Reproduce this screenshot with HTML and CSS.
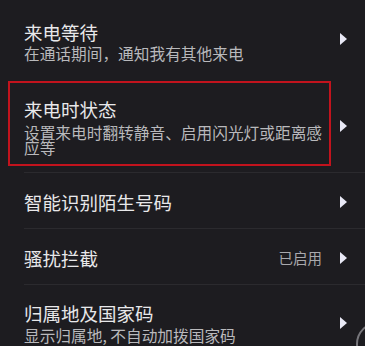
FILE: index.html
```html
<!DOCTYPE html>
<html lang="zh-CN">
<head>
<meta charset="utf-8">
<link rel="stylesheet" href="styles.css">
</head>
<body>
<div class="list">
  <div class="row row-first">
    <div class="text">
      <div class="title">来电等待</div>
      <div class="sub">在通话期间，通知我有其他来电</div>
    </div>
    <svg class="arrow arrow-up" viewBox="0 0 7 12" width="7" height="12"><polygon points="0,0 7,6 0,12"/></svg>
  </div>
  <div class="row row-box">
    <div class="highlight"></div>
    <div class="text">
      <div class="title">来电时状态</div>
      <div class="sub sub-wrap">设置来电时翻转静音、启用闪光灯或距离感应等</div>
    </div>
    <svg class="arrow" viewBox="0 0 7 12" width="7" height="12"><polygon points="0,0 7,6 0,12"/></svg>
  </div>
  <div class="row row-single">
    <div class="text">
      <div class="title">智能识别陌生号码</div>
    </div>
    <svg class="arrow" viewBox="0 0 7 12" width="7" height="12"><polygon points="0,0 7,6 0,12"/></svg>
  </div>
  <div class="row row-single">
    <div class="text">
      <div class="title">骚扰拦截</div>
    </div>
    <span class="value">已启用</span>
    <svg class="arrow" viewBox="0 0 7 12" width="7" height="12"><polygon points="0,0 7,6 0,12"/></svg>
  </div>
  <div class="row row-last">
    <div class="text">
      <div class="title">归属地及国家码</div>
      <div class="sub sub-last">显示归属地, 不自动加拨国家码</div>
    </div>
    <svg class="arrow arrow-last" viewBox="0 0 7 12" width="7" height="12"><polygon points="0,0 7,6 0,12"/></svg>
  </div>
</div>
<div class="fab"></div>
</body>
</html>
```
FILE: styles.css
```css
html, body {
  margin: 0;
  padding: 0;
  background: #1d1c20;
  overflow: hidden;
  height: 346px;
}
body {
  font-family: "Noto Sans CJK SC", "Noto Sans", sans-serif;
  color: #e6e6e8;
  position: relative;
}
.list {
  display: flex;
  flex-direction: column;
}
.row {
  position: relative;
  display: flex;
  align-items: center;
  margin-left: 24px;
  padding-right: 18px;
  border-top: 1px solid #2b2a2e;
  box-sizing: border-box;
  flex: none;
}
.row-first {
  border-top: none;
  height: 78px;
  padding-top: 19px;
  padding-bottom: 13px;
}
.row-box {
  height: 94px;
  border-top-color: #1d1c20;
}
.row-single {
  height: 56px;
  padding-top: 2px;
}
.row-last {
  height: 80px;
  padding-top: 16px;
  align-items: flex-start;
}
.text {
  flex: 1;
  min-width: 0;
  display: flex;
  flex-direction: column;
}
.title {
  font-size: 18.5px;
  line-height: 24px;
  color: #e8e8ea;
}
.sub {
  font-size: 15.7px;
  line-height: 20px;
  color: #b9b9bc;
}
.sub-wrap {
  margin-top: 4px;
  line-height: 15px;
  padding-right: 8px;
}
.sub-last {
  line-height: 22px;
}
.value {
  font-size: 14.5px;
  color: #a9a9ad;
  margin-right: 18px;
  margin-top: -1px;
}
.arrow {
  flex: none;
  fill: #e9e9f6;
}
.arrow-up {
  margin-bottom: 6px;
}
.arrow-last {
  margin-top: 16px;
}
.highlight {
  position: absolute;
  left: -16px;
  top: 2px;
  width: 323px;
  height: 85px;
  border: 2px solid #c2131d;
  box-sizing: border-box;
  pointer-events: none;
}
.fab {
  position: absolute;
  left: 356px;
  top: 322px;
  width: 44px;
  height: 44px;
  border-radius: 50%;
  border: 2px solid #77767b;
  box-sizing: border-box;
}
```
